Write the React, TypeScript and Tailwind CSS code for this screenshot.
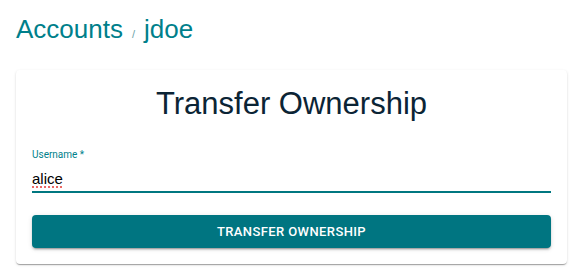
export default function App() {
  return (
    <div className="min-h-screen bg-white pl-4 pr-[13px] pt-[13px]" style={{ fontFamily: '"Liberation Sans", Arial, sans-serif' }}>
      <h1 className="flex items-baseline text-[26px] leading-[32px] font-normal text-[#007f8b]">
        <span>Accounts</span>
        <span className="mx-[9px] text-[11px] text-[#6aa3a8]">/</span>
        <span>jdoe</span>
      </h1>

      <div className="mt-[20px] rounded bg-white px-4 pt-[15px] pb-4 shadow-[0_2px_1px_-1px_rgba(0,0,0,0.2),0_1px_1px_0_rgba(0,0,0,0.14),0_1px_3px_0_rgba(0,0,0,0.12)]">
        <h2 className="text-center text-[31px] leading-[37px] font-normal text-[#0b2435]">Transfer Ownership</h2>

        <div className="mt-[27px]">
          <label className="block text-[10px] leading-[12px] text-[#007f8b]" style={{ fontFamily: 'Roboto, sans-serif' }}>
            Username *
          </label>
          <div className="border-b-2 border-[#007780] pt-[8px] pb-[3px] text-[15px] leading-[19px]">
            <span className="text-black underline decoration-dotted decoration-[#e53935] underline-offset-[3px]">
              alice
            </span>
          </div>
        </div>

        <button
          className="mt-[22px] flex h-[33px] w-full items-center justify-center rounded bg-[#007581] text-[13px] font-medium uppercase tracking-[0.4px] text-white shadow-[0_3px_1px_-2px_rgba(0,0,0,0.2),0_2px_2px_0_rgba(0,0,0,0.14),0_1px_5px_0_rgba(0,0,0,0.12)]"
          style={{ fontFamily: 'Roboto, sans-serif' }}
        >
          Transfer Ownership
        </button>
      </div>
    </div>
  );
}
